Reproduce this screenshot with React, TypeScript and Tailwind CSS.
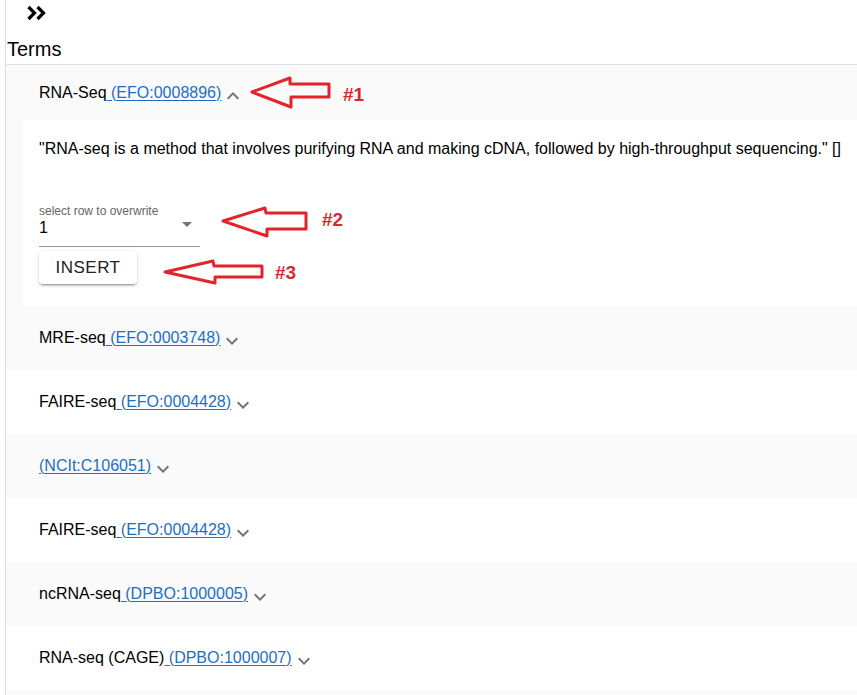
import React from "react";

type Term = {
  label: string;
  id: string;
};

const terms: Term[] = [
  { label: "MRE-seq", id: "EFO:0003748" },
  { label: "FAIRE-seq", id: "EFO:0004428" },
  { label: "", id: "NCIt:C106051" },
  { label: "FAIRE-seq", id: "EFO:0004428" },
  { label: "ncRNA-seq", id: "DPBO:1000005" },
  { label: "RNA-seq (CAGE)", id: "DPBO:1000007" },
];

function ExpandMore() {
  return (
    <svg width="24" height="24" viewBox="0 0 24 24" className="mt-[6px] shrink-0">
      <path d="M16.59 8.59 12 13.17 7.41 8.59 6 10l6 6 6-6z" fill="#757575" />
    </svg>
  );
}

function ExpandLess() {
  return (
    <svg width="24" height="24" viewBox="0 0 24 24" className="mt-[6px] shrink-0">
      <path d="m12 8-6 6 1.41 1.41L12 10.83l4.59 4.58L18 14z" fill="#757575" />
    </svg>
  );
}

function TermTitle({ label, id }: Term) {
  return (
    <span className="text-[16px] leading-5 whitespace-nowrap">
      {label}
      <a href="#" className="text-[#1c6fc4] underline underline-offset-2 decoration-[#1c6fc4]">
        {" "}({id})
      </a>
    </span>
  );
}

// red call-outs drawn over the page
function Annotations() {
  return (
    <svg
      className="absolute inset-0 pointer-events-none"
      width="857"
      height="695"
      viewBox="0 0 857 695"
    >
      <g fill="none" stroke="#e3232a" strokeWidth="3" strokeLinejoin="round">
        <path d="M252 92 L290 78 L290 84 L329 84 L329 97 L291 97 L291 107 Z" />
        <path d="M223 221 L265 208 L266 213 L306 213 L306 229 L267 229 L267 236 Z" />
        <path d="M165 272 L213 261 L214 266 L262 266 L262 277 L215 277 L215 283 Z" />
      </g>
      <g fill="#d7282f" fontFamily="'Liberation Sans', Arial, sans-serif" fontWeight="700" fontSize="19">
        <text x="343" y="101">#1</text>
        <text x="322" y="226">#2</text>
        <text x="275" y="279">#3</text>
      </g>
    </svg>
  );
}

export default function App() {
  return (
    <div className="relative h-[695px] overflow-hidden bg-white text-black font-['Liberation_Sans',Arial,sans-serif]">
      <div className="ml-[5px] h-full border-l border-[#dddddd]">
        <div className="h-[37px] pl-[20px] pt-[5px]">
          <svg width="22" height="17" viewBox="0 0 22 17">
            <g fill="none" stroke="#000" strokeWidth="3.2" strokeLinejoin="miter">
              <polyline points="2.5,2 8.5,8 2.5,14" />
              <polyline points="11.5,2 17.5,8 11.5,14" />
            </g>
          </svg>
        </div>
        <h2 className="pl-[1px] text-[20px] leading-6">Terms</h2>

        <div className="mt-[3px] border-t border-[#e0e0e0]">
          {/* expanded term */}
          <div className="bg-[#fafafa]">
            <div className="h-[55px] flex items-center pl-[33px]">
              <TermTitle label="RNA-Seq" id="EFO:0008896" />
              <ExpandLess />
            </div>
            <div className="ml-[17px] bg-white pl-[16px] pt-[17px] pb-[22px]">
              <p className="text-[16px] leading-6 whitespace-nowrap">
                "RNA-seq is a method that involves purifying RNA and making cDNA, followed by high-throughput sequencing." []
              </p>
              <div className="mt-[43px] w-[161px] border-b border-[#949494] pb-[8px]">
                <div className="text-[12px] leading-[14px] text-[#666666]">select row to overwrite</div>
                <div className="flex items-center justify-between">
                  <span className="text-[16px] leading-5">1</span>
                  <svg width="10" height="5" viewBox="0 0 10 5" className="mr-[8px] -mt-[8px]">
                    <path d="M0 0 L10 0 L5 5 Z" fill="#757575" />
                  </svg>
                </div>
              </div>
              <button className="mt-[4px] h-[33px] w-[98px] rounded-[4px] bg-white text-[17px] leading-5 tracking-[0.5px] text-[#222] shadow-[0px_3px_1px_-2px_rgba(0,0,0,0.2),0px_2px_2px_0px_rgba(0,0,0,0.14),0px_1px_5px_0px_rgba(0,0,0,0.12)]">
                INSERT
              </button>
            </div>
          </div>

          {terms.map((t, i) => (
            <div
              key={i}
              className={`h-[64px] flex items-center pl-[33px] ${i % 2 === 0 ? "bg-[#fafafa]" : "bg-white"}`}
            >
              <TermTitle label={t.label} id={t.id} />
              <ExpandMore />
            </div>
          ))}
          <div className="h-[64px] bg-[#fafafa]" />
        </div>
      </div>
      <Annotations />
    </div>
  );
}
